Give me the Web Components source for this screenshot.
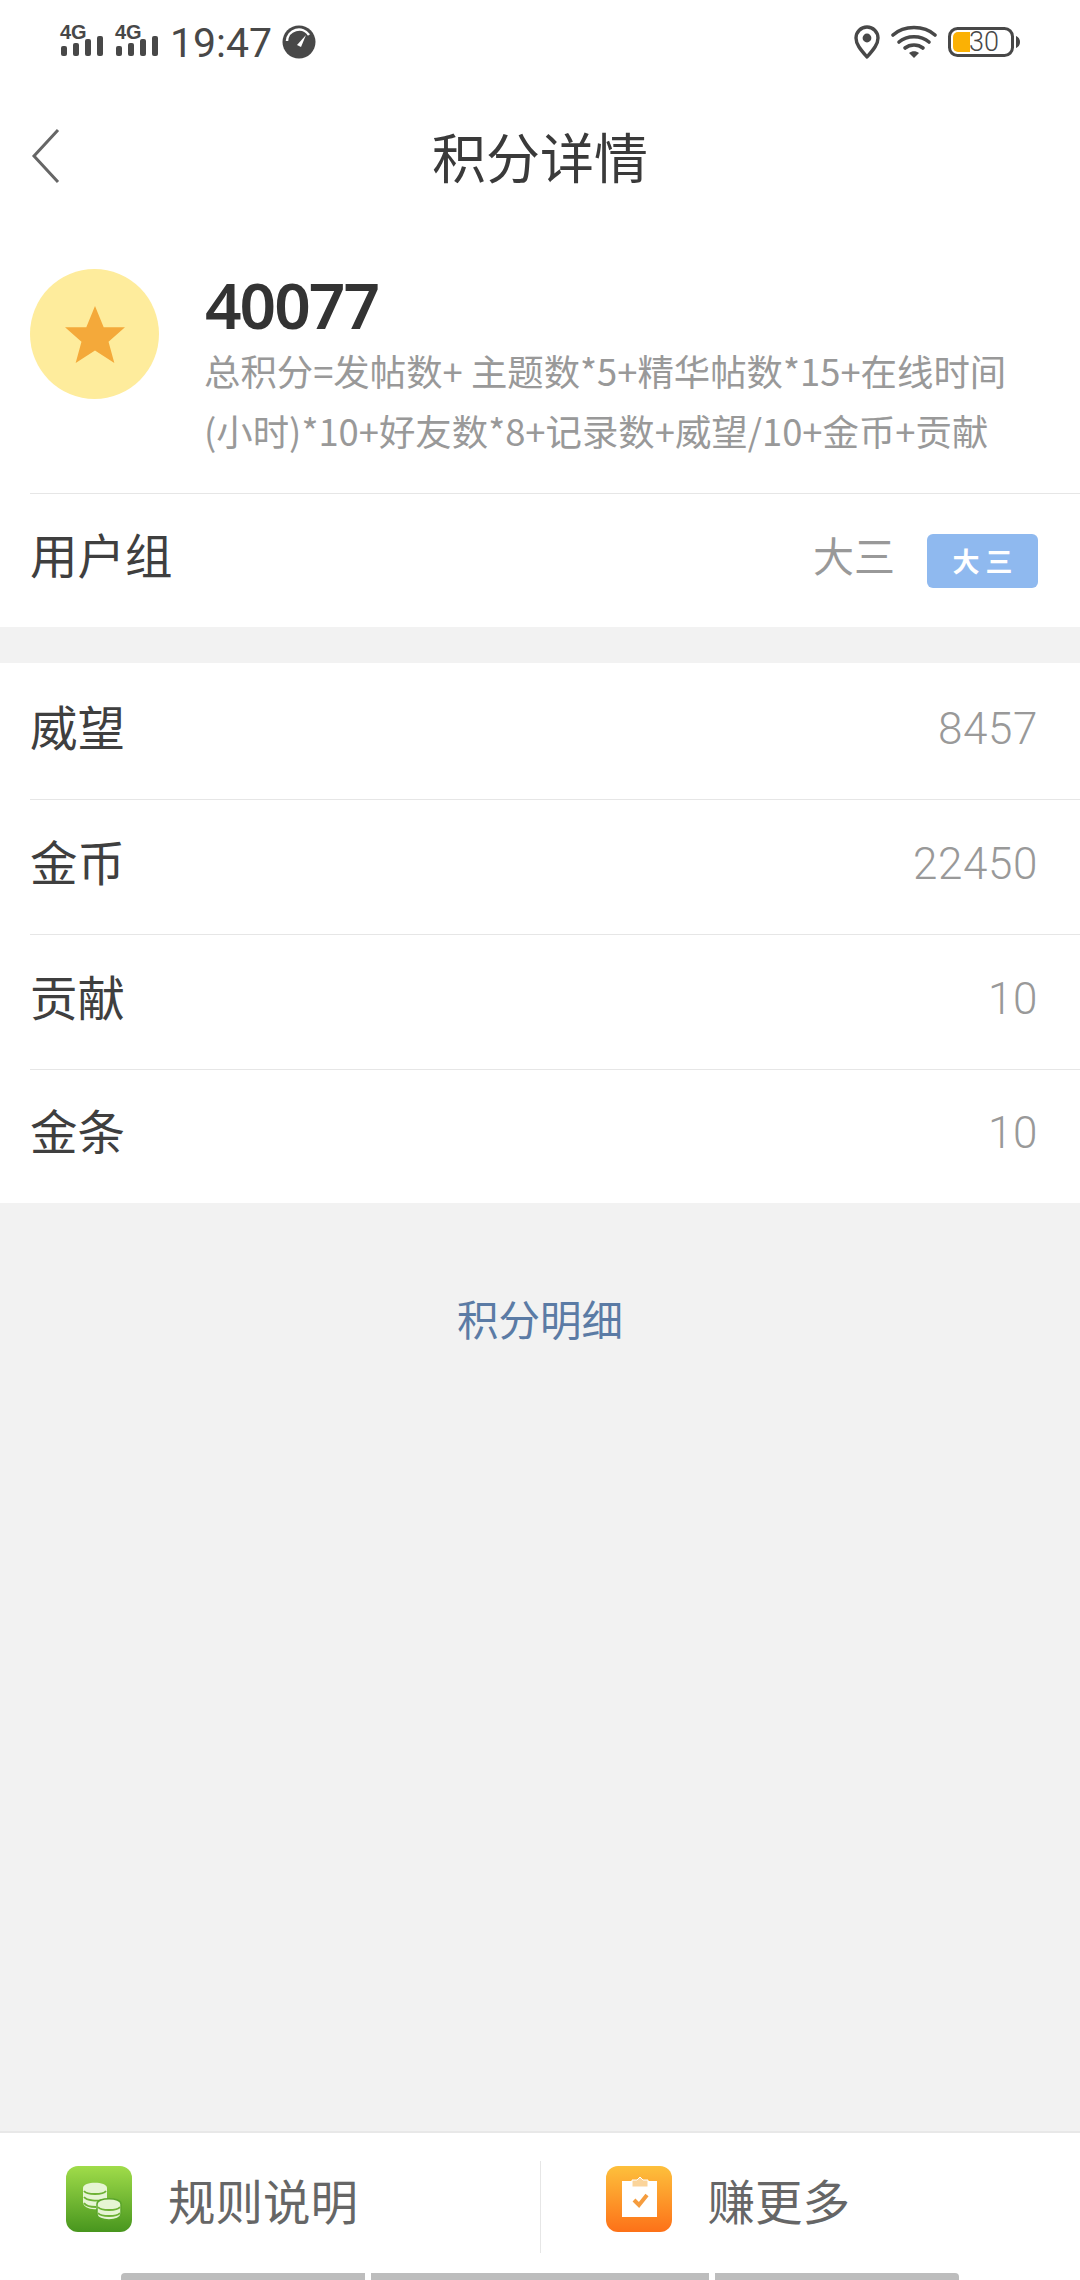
<!DOCTYPE html>
<html>
<head>
<meta charset="utf-8">
<title>积分详情</title>
<style>
    html, body { margin: 0; padding: 0; }
    body {
        width: 1080px;
        height: 2280px;
        overflow: hidden;
        background: #f2f2f2;
        font-family: "Noto Sans CJK SC", "Noto Sans", sans-serif;
    }
    #page { display: flex; flex-direction: column; height: 2280px; }
    #spacer { flex: 1; }
</style>
</head>
<body>
<div id="page">
    <status-bar></status-bar>
    <nav-header>积分详情</nav-header>
    <score-summary score="40077">总积分=发帖数+ 主题数*5+精华帖数*15+在线时间(小时)*10+好友数*8+记录数+威望/10+金币+贡献</score-summary>
    <group-row label="用户组" value="大三" badge="大 三"></group-row>
    <info-list>
        <info-row label="威望" value="8457"></info-row>
        <info-row label="金币" value="22450"></info-row>
        <info-row label="贡献" value="10"></info-row>
        <info-row label="金条" value="10" last></info-row>
    </info-list>
    <detail-link>积分明细</detail-link>
    <div id="spacer"></div>
    <app-footer>
        <footer-action slot="left" label="规则说明" pad="66" gap="36">
            <svg slot="icon" width="66" height="66" viewBox="0 0 66 66">
                <defs><linearGradient id="g1" x1="0" y1="0" x2="0" y2="1"><stop offset="0" stop-color="#a0dc4a"/><stop offset="1" stop-color="#48961e"/></linearGradient></defs>
                <rect width="66" height="66" rx="12" fill="url(#g1)"/>
                <path d="M17 22c0-7 24-7 24 0v14c-2 5-6 6-10 7-7 1-14-2-14-7z" fill="#e6f5d4"/>
                <g fill="none" stroke="#6db235" stroke-width="1.800">
                    <path d="M18 25c3 4 19 4 22 0"/>
                    <path d="M18 31c3 4 14 4 17 3"/>
                    <path d="M18 37c2 3 7 4 12 4"/>
                </g>
                <path d="M31 38c0-7 24-7 24 0v10c0 8-24 8-24 0z" fill="#e6f5d4" stroke="#5ba52a" stroke-width="1.500"/>
                <g fill="none" stroke="#6db235" stroke-width="1.800">
                    <path d="M32 41c3 4 19 4 22 0"/>
                    <path d="M32 47c3 4 19 4 22 0"/>
                </g>
            </svg>
        </footer-action>
        <footer-action slot="right" label="赚更多" pad="65" gap="36">
            <svg slot="icon" width="66" height="66" viewBox="0 0 66 66">
                <defs><linearGradient id="g2" x1="0" y1="0" x2="0" y2="1"><stop offset="0" stop-color="#fdc03c"/><stop offset="1" stop-color="#fd7118"/></linearGradient></defs>
                <rect width="66" height="66" rx="12" fill="url(#g2)"/>
                <rect x="16" y="15" width="35" height="36" fill="#fff"/>
                <path d="M26 14h5l3-3 3 3h5v7H26z" fill="#fbd49a" stroke="#fff" stroke-width="1"/>
                <path d="M28 34l5 5 8-10" fill="none" stroke="#f59c3e" stroke-width="4"/>
            </svg>
        </footer-action>
    </app-footer>
    <gesture-bar></gesture-bar>
</div>

<script>
class StatusBar extends HTMLElement {
    constructor() {
        super();
        this.shadow = this.attachShadow({ mode: 'open' });
    }

    connectedCallback() {
        const signal = `
            <div class="sig">
                <span class="g">4G</span>
                <svg width="45" height="20" viewBox="0 0 45 20" fill="#484848">
                    <rect x="1" y="10" width="6" height="10" rx="2"/>
                    <rect x="13" y="7" width="6" height="13" rx="2"/>
                    <rect x="25" y="3" width="6" height="17" rx="2"/>
                    <rect x="37" y="0" width="6" height="20" rx="2"/>
                </svg>
            </div>`;
        this.shadow.innerHTML = `
        <style>
            :host {
                display: flex;
                align-items: center;
                justify-content: space-between;
                height: 84px;
                padding: 0 60px 0 60px;
                background: #fff;
                color: #484848;
            }
            .side { display: flex; align-items: center; }
            .sig { display: flex; flex-direction: column; width: 45px; margin: -6px 10px 0 0; }
            .g {
                font: 700 20px/20px "Liberation Sans", sans-serif;
                height: 15px;
                margin-bottom: -1px;
            }
            .time {
                font: 400 41px/48px Roboto, sans-serif;
                margin: 2px 10px 0 0;
            }
            .batt {
                position: relative;
                display: flex;
                align-items: center;
                justify-content: center;
                width: 72px;
                height: 30px;
            }
            .batt svg { position: absolute; left: 0; top: 0; }
            .batt span {
                position: relative;
                font: 300 27px/30px Roboto, sans-serif;
            }
            .loc { margin-right: 11px; }
            .wifi { margin-right: 11px; }
        </style>
        <div class="side">
            ${signal}${signal}
            <span class="time">19:47</span>
            <svg width="34" height="34" viewBox="0 0 34 34">
                <circle cx="17" cy="17" r="16.500" fill="#484848"/>
                <path d="M5 16A12 12 0 0 1 27 10" fill="none" stroke="#fff" stroke-width="2.500"/>
                <path d="M15 20l9-10-5 12z" fill="#fff"/>
            </svg>
        </div>
        <div class="side">
            <svg class="loc" width="26" height="34" viewBox="0 0 26 34">
                <path d="M13 32C6 24 2 19 2 13a11 11 0 0 1 22 0c0 6-4 11-11 19z" fill="none" stroke="#484848" stroke-width="3.400" stroke-linejoin="round"/>
                <circle cx="13" cy="13" r="4.400" fill="#484848"/>
            </svg>
            <svg class="wifi" width="46" height="34" viewBox="0 0 46 34" fill="none" stroke="#484848" stroke-width="3.600" stroke-linecap="round">
                <path d="M2 10C13 0 33 0 44 10"/>
                <path d="M8 17C16 10 30 10 38 17"/>
                <path d="M14 23C19 19 27 19 32 23"/>
                <path d="M18 28C21 25.500 25 25.500 28 28L23 33z" fill="#484848" stroke="none"/>
            </svg>
            <div class="batt">
                <svg width="72" height="30" viewBox="0 0 72 30">
                    <rect x="1.500" y="1.500" width="63" height="27" rx="8" fill="none" stroke="#484848" stroke-width="3"/>
                    <path d="M10 5H22V25H10a5 5 0 0 1-5-5V10a5 5 0 0 1 5-5z" fill="#fbb104"/>
                    <path d="M68 9c2.500 1 4 3 4 6s-1.500 5-4 6z" fill="#484848"/>
                </svg>
                <span>30</span>
            </div>
        </div>
        `;
    }
}
customElements.define('status-bar', StatusBar);

class NavHeader extends HTMLElement {
    constructor() {
        super();
        this.shadow = this.attachShadow({ mode: 'open' });
    }

    connectedCallback() {
        this.shadow.innerHTML = `
        <style>
            :host {
                position: relative;
                display: flex;
                align-items: center;
                justify-content: center;
                height: 143px;
                padding-bottom: 3px;
                background: #fff;
                color: #3a3a3a;
                font-size: 54px;
            }
            svg { position: absolute; left: 30px; top: 42px; }
        </style>
        <svg width="32" height="60" viewBox="0 0 32 60" fill="none" stroke="#666" stroke-width="3">
            <path d="M28 4L4 30l24 26"/>
        </svg>
        <slot></slot>
        `;
    }
}
customElements.define('nav-header', NavHeader);

class ScoreSummary extends HTMLElement {
    constructor() {
        super();
        this.shadow = this.attachShadow({ mode: 'open' });
    }

    connectedCallback() {
        this.shadow.innerHTML = `
        <style>
            :host {
                display: flex;
                align-items: flex-start;
                height: 263px;
                padding-left: 30px;
                background: #fff;
            }
            .coin {
                flex: none;
                display: flex;
                align-items: center;
                justify-content: center;
                width: 129px;
                height: 130px;
                margin-top: 39px;
                border-radius: 50%;
                background: #feec9c;
            }
            .text { margin-left: 46px; width: 835px; padding-top: 37px; }
            .score {
                font: 600 64px/76px "Noto Sans", sans-serif;
                letter-spacing: -2px;
                color: #333;
            }
            .desc {
                margin: -3px 0 0 -1px;
                font-size: 36.400px;
                line-height: 60px;
                color: #999;
            }
        </style>
        <div class="coin">
            <svg width="60" height="58" viewBox="0 0 62 60"><path d="M31 1l9 22h22L45 38l6 22-20-13-20 13 6-22L0 23h22z" fill="#f4a93a"/></svg>
        </div>
        <div class="text">
            <div class="score">${this.getAttribute('score')}</div>
            <div class="desc"><slot></slot></div>
        </div>
        `;
    }
}
customElements.define('score-summary', ScoreSummary);

class GroupRow extends HTMLElement {
    constructor() {
        super();
        this.shadow = this.attachShadow({ mode: 'open' });
    }

    connectedCallback() {
        this.shadow.innerHTML = `
        <style>
            :host {
                display: block;
                padding-left: 30px;
                background: #fff;
            }
            .inner {
                display: flex;
                align-items: center;
                height: 133px;
                padding-right: 42px;
                border-top: 1px solid #e6e6e6;
            }
            .label { flex: 1; font-size: 47.500px; color: #3f3f3f; padding-bottom: 14px; }
            .value { font-size: 41px; color: #999; padding-bottom: 14px; }
            .badge {
                display: flex;
                align-items: center;
                justify-content: center;
                width: 111px;
                height: 54px;
                margin-left: 32px;
                border-radius: 6px;
                background: #8fb9ef;
                color: #fff;
                font-size: 27px;
                font-weight: 700;
                white-space: pre;
            }
        </style>
        <div class="inner">
            <span class="label">${this.getAttribute('label')}</span>
            <span class="value">${this.getAttribute('value')}</span>
            <span class="badge">${this.getAttribute('badge')}</span>
        </div>
        `;
    }
}
customElements.define('group-row', GroupRow);

class InfoList extends HTMLElement {
    constructor() {
        super();
        this.shadow = this.attachShadow({ mode: 'open' });
    }

    connectedCallback() {
        this.shadow.innerHTML = `
        <style>
            :host { display: block; margin-top: 36px; padding-top: 2px; background: #fff; }
        </style>
        <slot></slot>
        `;
    }
}
customElements.define('info-list', InfoList);

class InfoRow extends HTMLElement {
    constructor() {
        super();
        this.shadow = this.attachShadow({ mode: 'open' });
    }

    connectedCallback() {
        this.shadow.innerHTML = `
        <style>
            :host { display: block; padding-left: 30px; }
            .inner {
                display: flex;
                align-items: center;
                justify-content: space-between;
                height: 134px;
                padding-right: 42px;
                border-bottom: 1px solid #e6e6e6;
            }
            :host([last]) .inner { height: 133px; border-bottom: none; }
            .label { font-size: 47.500px; color: #3f3f3f; padding-bottom: 14px; }
            .value { font: 300 44px/50px Roboto, sans-serif; letter-spacing: 0.600px; color: #999; padding-bottom: 7px; }
        </style>
        <div class="inner">
            <span class="label">${this.getAttribute('label')}</span>
            <span class="value">${this.getAttribute('value')}</span>
        </div>
        `;
    }
}
customElements.define('info-row', InfoRow);

class DetailLink extends HTMLElement {
    constructor() {
        super();
        this.shadow = this.attachShadow({ mode: 'open' });
    }

    connectedCallback() {
        this.shadow.innerHTML = `
        <style>
            :host {
                display: flex;
                justify-content: center;
                padding-top: 85px;
                font-size: 41.500px;
                line-height: 60px;
                color: #5b7ba5;
            }
        </style>
        <slot></slot>
        `;
    }
}
customElements.define('detail-link', DetailLink);

class AppFooter extends HTMLElement {
    constructor() {
        super();
        this.shadow = this.attachShadow({ mode: 'open' });
    }

    connectedCallback() {
        this.shadow.innerHTML = `
        <style>
            :host {
                display: flex;
                align-items: center;
                height: 140px;
                background: #fff;
                border-top: 2px solid #e8e8e8;
            }
            .cell { flex: 1; display: flex; }
            .line { width: 1px; height: 92px; margin-top: 8px; background: #e6e6e6; }
        </style>
        <div class="cell"><slot name="left"></slot></div>
        <div class="line"></div>
        <div class="cell"><slot name="right"></slot></div>
        `;
    }
}
customElements.define('app-footer', AppFooter);

class FooterAction extends HTMLElement {
    constructor() {
        super();
        this.shadow = this.attachShadow({ mode: 'open' });
    }

    connectedCallback() {
        this.shadow.innerHTML = `
        <style>
            :host {
                display: flex;
                align-items: center;
                gap: ${this.getAttribute('gap')}px;
                padding-left: ${this.getAttribute('pad')}px;
                padding-bottom: 8px;
                font-size: 47.500px;
                color: #666;
            }
        </style>
        <slot name="icon"></slot>
        <span>${this.getAttribute('label')}</span>
        `;
    }
}
customElements.define('footer-action', FooterAction);

class GestureBar extends HTMLElement {
    constructor() {
        super();
        this.shadow = this.attachShadow({ mode: 'open' });
    }

    connectedCallback() {
        this.shadow.innerHTML = `
        <style>
            :host {
                display: flex;
                gap: 6px;
                height: 7px;
                padding: 0 121px;
                background: #fff;
            }
            i { display: block; height: 7px; background: #bdbdbd; }
            i:nth-of-type(1) { width: 244px; border-top-left-radius: 4px; }
            i:nth-of-type(2) { width: 338px; }
            i:nth-of-type(3) { width: 244px; border-top-right-radius: 4px; }
        </style>
        <i></i><i></i><i></i>
        `;
    }
}
customElements.define('gesture-bar', GestureBar);
</script>
</body>
</html>
